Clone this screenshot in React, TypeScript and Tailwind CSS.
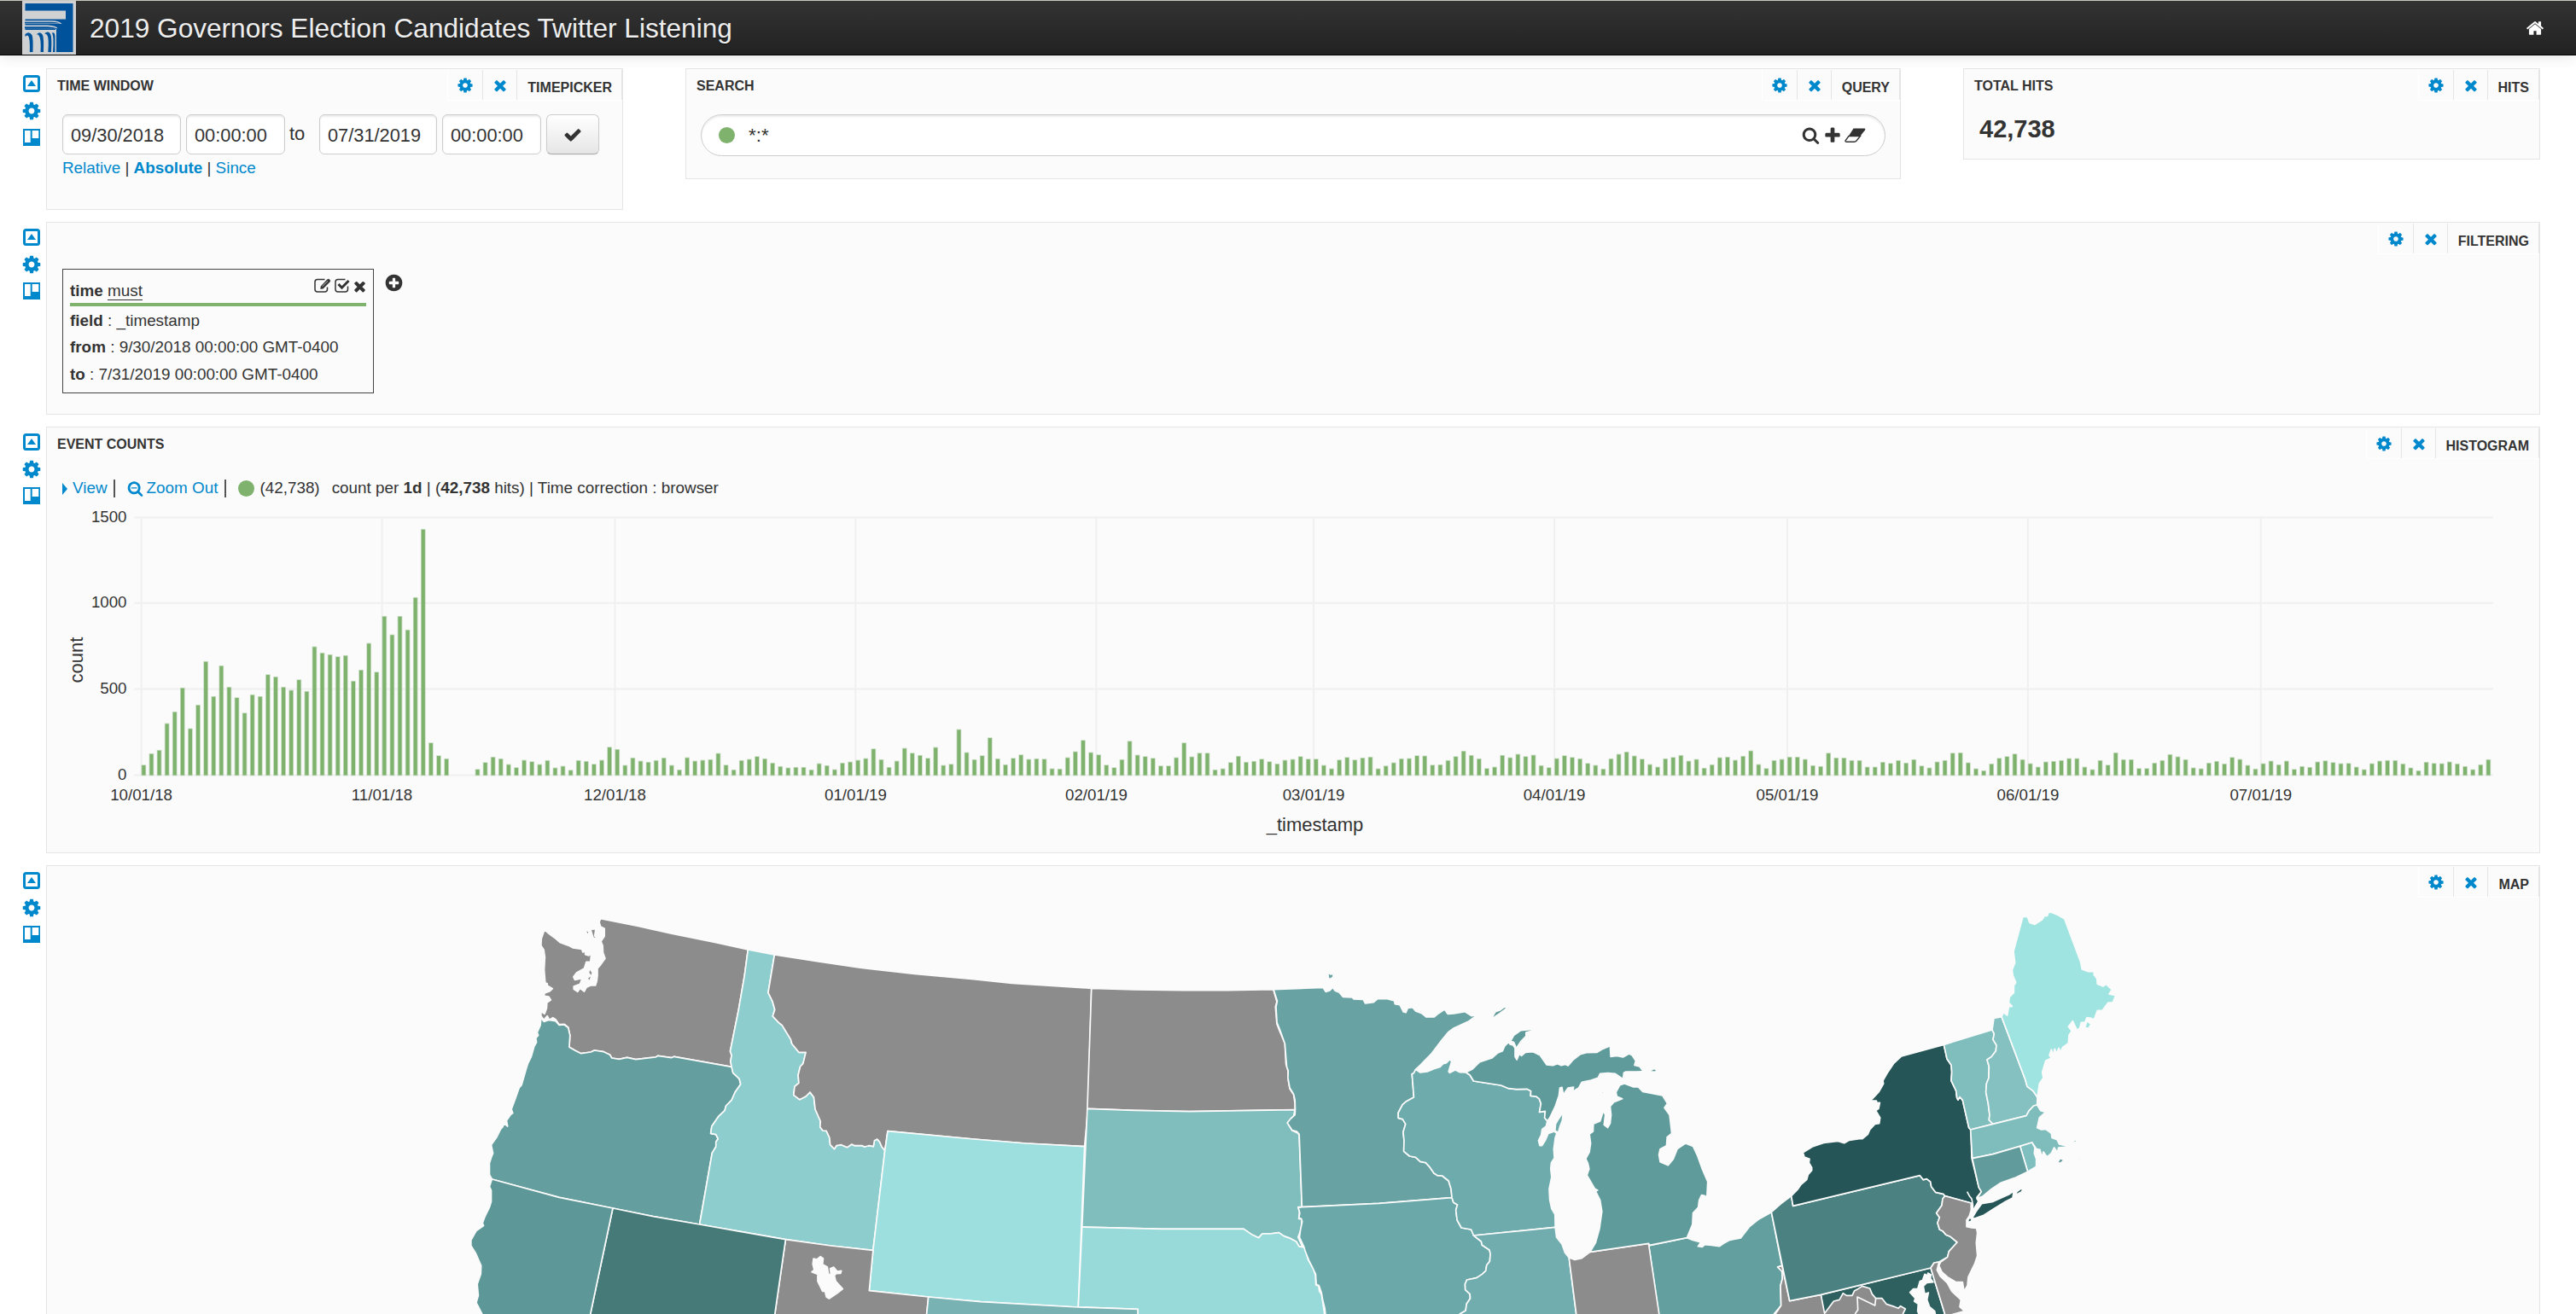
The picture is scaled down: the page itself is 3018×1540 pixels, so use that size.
import type { ReactNode } from "react";

const GLYPHS = {
  cog: "M1152 896q0-106-75-181t-181-75-181 75-75 181 75 181 181 75 181-75 75-181zm512-109v222q0 12-8 23t-20 13l-185 28q-19 54-39 91 35 50 107 138 10 12 10 25t-9 23q-27 37-99 108t-94 71q-12 0-26-9l-138-108q-44 23-91 38-16 136-29 186-7 28-36 28h-222q-14 0-24.5-8.5t-11.5-21.5l-28-184q-49-16-90-37l-141 107q-10 9-25 9-14 0-25-11-126-114-165-168-7-10-7-23 0-12 8-23 15-21 51-66.5t54-70.5q-27-50-41-99l-183-27q-13-2-21-12.5t-8-23.5v-222q0-12 8-23t19-13l186-28q14-46 39-92-40-57-107-138-10-12-10-24 0-10 9-23 26-36 98.5-107.5t94.5-71.5q13 0 26 10l138 107q44-23 91-38 16-136 29-186 7-28 36-28h222q14 0 24.5 8.5t11.5 21.5l28 184q49 16 90 37l142-107q9-9 24-9 13 0 25 10 129 119 165 170 7 8 7 22 0 12-8 23-15 21-51 66.5t-54 70.5q26 50 41 98l183 28q13 2 21 12.5t8 23.5z",
  times: "M1490 1322q0 40-28 68l-136 136q-28 28-68 28t-68-28l-294-294-294 294q-28 28-68 28t-68-28l-136-136q-28-28-28-68t28-68l294-294-294-294q-28-28-28-68t28-68l136-136q28-28 68-28t68 28l294 294 294-294q28-28 68-28t68 28l136 136q28 28 28 68t-28 68l-294 294 294 294q28 28 28 68z",
  plus: "M1600 736v192q0 40-28 68t-68 28h-416v416q0 40-28 68t-68 28h-192q-40 0-68-28t-28-68v-416h-416q-40 0-68-28t-28-68v-192q0-40 28-68t68-28h416v-416q0-40 28-68t68-28h192q40 0 68 28t28 68v416h416q40 0 68 28t28 68z",
  check: "M1671 566q0 40-28 68l-724 724-136 136q-28 28-68 28t-68-28l-136-136-362-362q-28-28-28-68t28-68l136-136q28-28 68-28t68 28l294 295 656-657q28-28 68-28t68 28l136 136q28 28 28 68z",
  search: "M1216 832q0-185-131.5-316.5t-316.5-131.5-316.5 131.5-131.5 316.5 131.5 316.5 316.5 131.5 316.5-131.5 131.5-316.5zm512 832q0 52-38 90t-90 38q-54 0-90-38l-343-342q-179 124-399 124-143 0-273.5-55.5t-225-150-150-225-55.5-273.5 55.5-273.5 150-225 225-150 273.5-55.5 273.5 55.5 225 150 150 225 55.5 273.5q0 220-124 399l343 343q37 37 37 90z",
  zoomOut: "M1088 800v64q0 13-9.5 22.5t-22.5 9.5h-576q-13 0-22.5-9.5t-9.5-22.5v-64q0-13 9.5-22.5t22.5-9.5h576q13 0 22.5 9.5t9.5 22.5zM1216 832q0-185-131.5-316.5t-316.5-131.5-316.5 131.5-131.5 316.5 131.5 316.5 316.5 131.5 316.5-131.5 131.5-316.5zm512 832q0 52-38 90t-90 38q-54 0-90-38l-343-342q-179 124-399 124-143 0-273.5-55.5t-225-150-150-225-55.5-273.5 55.5-273.5 150-225 225-150 273.5-55.5 273.5 55.5 225 150 150 225 55.5 273.5q0 220-124 399l343 343q37 37 37 90z",
  home: "M1472 992v480q0 26-19 45t-45 19h-384v-384h-256v384h-384q-26 0-45-19t-19-45v-480q0-1 .5-3t.5-3l575-474 575 474q1 2 1 6zm223-69l-62 74q-8 9-21 11h-3q-13 0-21-7l-692-577-692 577q-12 8-24 7-13-2-21-11l-62-74q-8-10-7-23.5t11-21.5l719-599q32-26 76-26t76 26l244 204v-195q0-14 9-23t23-9h192q14 0 23 9t9 23v408l219 182q10 8 11 21.5t-7 23.5z",
  plusCircle: "M1344 960v-128q0-26-19-45t-45-19h-256v-256q0-26-19-45t-45-19h-128q-26 0-45 19t-19 45v256h-256q-26 0-45 19t-19 45v128q0 26 19 45t45 19h256v256q0 26 19 45t45 19h128q26 0 45-19t19-45v-256h256q26 0 45-19t19-45zm320-64q0 209-103 385.5t-279.5 279.5-385.5 103-385.5-103-279.5-279.5-103-385.5 103-385.5 279.5-279.5 385.5-103 385.5 103 279.5 279.5 103 385.5z",
};

function Glyph({ name, className = "" }: { name: keyof typeof GLYPHS; className?: string }) {
  return (
    <svg viewBox="0 0 1792 1792" fill="currentColor" className={`shrink-0 ${className}`}>
      <path d={GLYPHS[name]} />
    </svg>
  );
}

function Logo() {
  return (
    <svg viewBox="0 0 63 63" className="ml-[26px] h-[63px] w-[63px]">
      <rect width="63" height="63" fill="#d0d1d3" />
      <rect x="3.5" y="3" width="56" height="57" fill="#00529b" />
      <g fill="#d0d1d3">
        <path d="M3 11.5H51V21.5H3Z" />
        <path d="M3 23.3H34Q44 23.5 46.5 27H3Z" />
        <path d="M3 28.6H30Q40 29 41.5 32.3H3Z" />
        <path d="M3 34H39V60H3Z" />
      </g>
      <path d="M3 24.8H34Q41 25 45 26.6H3ZM3 30.2H30Q37 30.5 41 32.2H3Z" fill="#00529b" />
      <path
        d="M3.5 42V39Q8 35 11.500 40Q13 43 12.500 60H8.800Q9.500 44 7 41Q5.500 39.500 3.500 42ZM16 40Q21 34.500 24 40Q25.500 43 25 60H21.500Q22.500 44 19.500 40.500Q18 38.500 16 40ZM26 38.500Q31 34 33.500 40Q34.800 43 34 60H30.300Q31.500 44 29.500 40.500Q28 38 26 38.500ZM35 37.500Q38 36 38.500 41V60H36Q37.500 42 35 37.500Z"
        fill="#00529b"
      />
      <path d="M39.500 33V60" stroke="#d0d1d3" strokeWidth="1" />
    </svg>
  );
}

function RowIcons() {
  return (
    <div className="flex w-[27px] shrink-0 flex-col pt-2 text-[#0088cc]">
      <svg viewBox="0 0 20 20" className="h-5 w-5">
        <rect x="1.5" y="1.5" width="17" height="17" rx="2" fill="none" stroke="currentColor" strokeWidth="3" />
        <path d="M5 13L10 6L15 13Z" fill="currentColor" />
      </svg>
      <Glyph name="cog" className="-ml-[2px] mt-[10px] h-6 w-6" />
      <svg viewBox="0 0 20 20" className="mt-[9px] h-5 w-5">
        <path d="M0 0H20V20H0Z" fill="currentColor" />
        <path d="M2 2H8.700V16H2ZM10.700 2H18.300V11H10.700Z" fill="#fff" />
      </svg>
    </div>
  );
}

function Panel({
  title,
  kind,
  className,
  children,
}: {
  title?: string;
  kind: string;
  className: string;
  children?: ReactNode;
}) {
  return (
    <section className={`flex shrink-0 flex-col border border-[#e5e5e5] bg-[#fbfbfb] ${className}`}>
      <header className="flex h-[53px] shrink-0 items-start justify-between text-[16px] font-bold">
        <h2 className="pl-3 leading-[40px]">{title}</h2>
        <div className="mt-px flex h-9 border-b border-white">
          <span className="flex w-[41px] items-center justify-center border-l border-white text-[#0088cc]">
            <Glyph name="cog" className="h-5 w-5" />
          </span>
          <span className="flex w-[40px] items-center justify-center border-l border-[#e5e5e5] pl-px text-[#0088cc]">
            <Glyph name="times" className="h-5 w-5" />
          </span>
          <span className="border-x border-[#e5e5e5] pl-3 pr-[11px] leading-[41px]">{kind}</span>
        </div>
      </header>
      {children}
    </section>
  );
}

function Field({ value, className }: { value: string; className: string }) {
  return (
    <div
      className={`h-[47px] rounded-[6px] border border-[#ccc] bg-white pl-[9px] text-[21.8px] leading-[47px] shadow-[inset_0_2px_2px_rgba(0,0,0,0.075)] ${className}`}
    >
      {value}
    </div>
  );
}

function TimePicker() {
  return (
    <div className="pl-[18px]">
      <div className="flex items-start">
        <Field value="09/30/2018" className="w-[139px]" />
        <Field value="00:00:00" className="ml-[6px] w-[116px]" />
        <span className="ml-[5px] w-[35px] text-[22px] leading-[45px]">to</span>
        <Field value="07/31/2019" className="w-[138px]" />
        <Field value="00:00:00" className="ml-[6px] w-[116px]" />
        <div className="ml-[6px] flex h-[47px] w-[62px] items-center justify-center rounded-[6px] border border-[#ccc] border-b-[#aaa] bg-linear-to-b from-white to-[#e6e6e6] shadow-[0_1px_2px_rgba(0,0,0,0.05)]">
          <Glyph name="check" className="h-[22px] w-[22px]" />
        </div>
      </div>
      <div className="whitespace-pre pt-[6px] text-[18.86px] leading-[20px]">
        <span className="text-[#0088cc]">Relative</span> | <b className="text-[#0088cc]">Absolute</b> |{" "}
        <span className="text-[#0088cc]">Since</span>
      </div>
    </div>
  );
}

function Search() {
  return (
    <div className="ml-[17px] mr-[17px] flex h-[49px] items-center rounded-full border border-[#ccc] bg-white pl-5 pr-[22px] shadow-[inset_0_2px_2px_rgba(0,0,0,0.075)]">
      <span className="h-[19px] w-[19px] rounded-full bg-[#7eb26d]" />
      <span className="ml-[16px] text-[22.4px] leading-[47px]">*:*</span>
      <div className="ml-auto flex items-center">
        <Glyph name="search" className="h-[21px] w-[21px]" />
        <Glyph name="plus" className="ml-[4px] h-[22px] w-[22px]" />
        <svg viewBox="0 0 25 17" className="ml-[3px] h-[17px] w-[25px]">
          <path d="M10.500 0.500H23.500Q25 0.500 24 2.500L18 10H4.500Z" fill="currentColor" />
          <path d="M5 9.500L1.200 14.500Q0.500 16.200 2 16.200H11.500Q13 16.200 14 15L18.500 9.500Z" fill="none" stroke="currentColor" strokeWidth="1.4" />
        </svg>
      </div>
    </div>
  );
}

function Filters() {
  return (
    <div className="flex pl-[18px] pt-px">
      <div className="h-[146px] w-[365px] border border-[#444] px-2 pt-[9px] text-[18.86px]">
        <div className="flex h-[34px] items-start border-b-4 border-[#7eb26d]">
          <span className="whitespace-pre leading-[31px]">
            <b>time</b> <span className="border-b border-[#333]">must</span>
          </span>
          <div className="-mr-[2px] ml-auto flex items-start">
            <svg viewBox="0 0 20 18" className="mt-px h-[18px] w-[20px]" fill="none" stroke="currentColor" strokeWidth="1.5">
              <path d="M12.500 1.500H4Q1 1.500 1 4.500V13Q1 16 4 16H12.500Q15.500 16 15.500 13V10.500" />
              <path d="M7.500 12.500L8 9.500L15.500 1.500Q17 0.500 18.500 2Q19.500 3.500 18 4.700L10.500 12.300Z" fill="currentColor" strokeWidth="0.400" />
              <path d="M9.500 9.800L16 3.400" stroke="#fbfbfb" strokeWidth="0.700" />
            </svg>
            <svg viewBox="0 0 18 18" className="ml-[4px] mt-px h-[18px] w-[18px]" fill="none" stroke="currentColor">
              <path d="M12.500 1.500H4Q1 1.500 1 4.500V13Q1 16 4 16H12.500Q15.500 16 15.500 13V9.500" strokeWidth="1.500" />
              <path d="M4.500 7L8.500 11.200L16.500 3" strokeWidth="3" />
            </svg>
            <Glyph name="times" className="ml-[2px] mt-px h-[19px] w-[19px]" />
          </div>
        </div>
        <div className="whitespace-pre leading-[31.4px] -mr-2 pt-[1px]">
          <p><b>field</b> : _timestamp</p>
          <p><b>from</b> : 9/30/2018 00:00:00 GMT-0400</p>
          <p><b>to</b> : 7/31/2019 00:00:00 GMT-0400</p>
        </div>
      </div>
      <Glyph name="plusCircle" className="ml-[12px] mt-[5px] h-[23px] w-[23px]" />
    </div>
  );
}

// Bar tops in thirds of a pixel above each block's own baseline, one per day from 10/01/18.
const TOPS_A = [
  950, 910, 898, 804, 763, 679, 822, 739, 586, 709,
  601, 676, 713, 767, 703, 709, 632, 640, 676, 687,
  650, 691, 534, 556, 562, 569, 565, 655, 616, 522,
  623, 427, 492, 427, 475, 361, 121, 872, 917, 928,
  987, 987, 987, 965, 941, 922, 928, 948, 959, 933,
  938, 948, 934, 960, 954, 968, 934, 937, 947, 933,
  887, 895, 951, 925, 936, 940, 934, 925, 951, 967,
];
const TOPS_B = [
  324, 336, 333, 331, 309, 350, 367, 334, 330, 320,
  328, 343, 355, 360, 358, 358, 367, 345, 352, 366,
  343, 339, 333, 327, 293, 331, 358, 336, 291, 308,
  316, 326, 288, 351, 347, 225, 306, 331, 317, 254,
  328, 349, 326, 314, 330, 328, 329, 363, 364, 324,
  303, 263, 306, 314, 350, 359, 331, 266, 315, 320,
  326, 353, 353, 324, 272, 321, 308, 308, 367, 363,
  341, 319, 340, 337, 329, 338, 346, 333, 330, 320,
  329, 329, 351, 363, 332, 323, 332, 325, 322, 363,
  353, 342, 328, 327, 317, 318, 350, 349, 334, 320,
  301, 316, 328, 362, 357, 316, 324, 312, 320, 315,
  352, 359, 327, 317, 323, 328, 344, 351, 364, 328,
  312,
  304, 318, 329, 348, 357, 328, 323, 316, 336, 330,
  361, 349, 324, 322, 333, 319, 300, 348, 362, 334,
  330, 322, 322, 330, 352, 355, 308, 325, 325, 334,
  334, 357, 357, 340, 344, 334, 343, 331, 353, 360,
  339, 334, 308, 307, 342, 363, 370, 346, 326, 320,
  311, 331, 345, 357, 339, 337, 334, 327, 327, 357,
  366, 334, 350, 307, 331, 331, 362, 362, 343, 334,
  313, 321, 331, 360, 363, 343, 337, 346, 323, 330,
  351, 364, 345, 336, 349, 336, 365, 355, 358, 339,
  335, 341, 345, 344, 357, 366, 345, 336, 334, 334,
  346, 360, 370, 340, 344, 345, 339, 346, 355, 366,
  349, 331,
];
const BARS = [...TOPS_A.map((t) => (987 - t) / 3), ...TOPS_B.map((t) => (387 - t) / 3)];
const DAY = 9.096;
const X0 = 165.6;
const BASE = 908.6;
const MONTHS: [number, string][] = [
  [0, "10/01/18"], [31, "11/01/18"], [61, "12/01/18"], [92, "01/01/19"], [123, "02/01/19"],
  [151, "03/01/19"], [182, "04/01/19"], [212, "05/01/19"], [243, "06/01/19"], [273, "07/01/19"],
];
const LEVELS: [number, string][] = [[908.6, "0"], [807.6, "500"], [706.8, "1000"], [606.5, "1500"]];

function Histogram() {
  return (
    <svg viewBox="55 590 2920 408" className="h-[408px] w-[2920px] font-['Liberation_Sans',sans-serif]">
      <g stroke="#f0f0f0" strokeWidth="2">
        {LEVELS.map(([y]) => <line key={y} x1="157" x2="2921" y1={y} y2={y} />)}
        {MONTHS.map(([d]) => <line key={d} x1={X0 + d * DAY} x2={X0 + d * DAY} y1="606" y2="909" />)}
      </g>
      <g fill="#7eb26d" stroke="#7eb26d" strokeOpacity="0.4" strokeWidth="1.600">
        {BARS.map((h, i) => h > 0 && <rect key={i} x={X0 + i * DAY + 0.7} y={BASE - h + 0.8} width="4.100" height={h - 1} />)}
      </g>
      <g fill="#333" fontSize="18.72">
        {LEVELS.map(([y, t]) => <text key={t} x="148.500" y={y + 5.500} textAnchor="end">{t}</text>)}
        {MONTHS.map(([d, t]) => <text key={t} x={X0 + d * DAY} y="938" textAnchor="middle">{t}</text>)}
      </g>
      <g fill="#333" fontSize="22" textAnchor="middle">
        <text x="1540.500" y="974">_timestamp</text>
        <text transform="translate(97 773.500) rotate(-90)">count</text>
      </g>
    </svg>
  );
}

function EventCounts() {
  return (
    <>
      <div className="flex h-[36px] shrink-0 items-center pl-[18px] pt-[1px] text-[18.86px]">
        <svg viewBox="0 0 6 14" className="h-[14px] w-[6px] text-[#0088cc]"><path d="M0 0L6 7L0 14Z" fill="currentColor" /></svg>
        <span className="ml-[6px] text-[#0088cc]">View</span>
        <span className="ml-[7px] h-[21px] w-[2px] bg-[#555]" />
        <Glyph name="zoomOut" className="ml-[14px] h-[19px] w-[19px] text-[#0088cc]" />
        <span className="ml-[4px] text-[#0088cc]">Zoom Out</span>
        <span className="ml-[8px] h-[21px] w-[2px] bg-[#555]" />
        <span className="ml-[14px] h-[19px] w-[19px] rounded-full bg-[#7eb26d]" />
        <span className="ml-[6px]">(42,738)</span>
        <span className="ml-[14px] whitespace-pre">count per <b>1d</b> | (<b>42,738</b> hits) | Time correction : browser</span>
      </div>
      <Histogram />
    </>
  );
}

type Shape = [fill: string, d: string];
const GRAY = "#8c8c8c";
const PAPER = "#fbfbfb";

const WEST: Shape[] = [
  [GRAY, "M499,110 610,137 700,162 830,194 922,219 912,310 895,430 871,576 875,590 872,612 875,631 710,595 702,599 663,592 657,597 600,605 575,598 552,604 531,600 526,589 508,578 481,573 471,579 443,584 425,573 409,562 411,520 406,492 395,481 380,482 370,464 362,458 352,466 346,452 336,466 328,452 328,436 338,445 344,425 345,405 356,396 350,384 337,382 338,372 352,366 361,356 346,345 346,338 340,335 337,290 339,245 336,220 328,205 329,180 338,149 350,162 370,180 382,193 408,205 420,213 445,217 448,228 455,225 455,236 465,240 472,232 470,262 458,262 452,285 430,300 421,315 425,325 446,320 440,340 422,348 422,358 433,367 440,355 452,366 458,352 470,345 484,345 488,330 490,310 490,285 497,275 512,250 506,230 505,205 500,190 510,172 510,145 499,138 495,122Z"],
  [GRAY, "M455,150 466,155 462,170ZM470,148 485,146 482,170 490,182 478,178ZM468,285 476,300 468,330 460,320 470,310 464,300Z"],
  ["#649e9e", "M328,458 336,472 350,466 370,470 380,484 395,483 406,494 411,520 409,562 425,573 443,584 471,579 481,573 508,578 526,589 531,600 552,604 575,598 600,605 657,597 663,592 702,599 710,595 875,631 879,652 897,673 901,692 885,720 875,748 859,768 855,785 837,806 818,840 815,865 830,869 836,884 830,895 830,912 819,934 783,1185 650,1157 534,1128 380,1090 187,1026 180,1010 180,970 185,950 190,935 185,905 200,880 212,850 218,842 222,830 232,840 229,820 240,800 247,794 243,780 255,740 265,705 272,695 278,670 285,640 290,620 300,595 308,560 315,545 313,530 320,520 317,510 326,485Z"],
  ["#8ecdcd", "M922,219 998,237 980,370 992,400 999,430 993,453 1010,475 1020,485 1045,535 1048,550 1060,568 1068,580 1088,580 1080,620 1072,630 1066,660 1068,688 1056,700 1053,730 1070,746 1088,735 1100,720 1111,738 1115,780 1130,822 1129,843 1137,855 1147,856 1156,880 1158,905 1170,920 1176,908 1190,905 1207,914 1220,903 1228,908 1250,908 1256,912 1270,908 1282,911 1285,890 1293,885 1300,895 1306,912 1315,925 1281,1276 1160,1260 1030,1238 900,1210 783,1185 819,934 830,912 830,895 836,884 830,869 815,865 818,840 837,806 855,785 859,768 875,748 885,720 901,692 897,673 879,652 875,631 872,612 875,590 871,576 895,430 912,310Z"],
  [GRAY, "M998,237 1120,260 1240,282 1400,304 1570,323 1680,337 1908,355 1898,778 1888,911 1720,900 1570,885 1323,857 1315,925 1306,912 1300,895 1293,885 1285,890 1282,911 1270,908 1256,912 1250,908 1228,908 1220,903 1207,914 1190,905 1176,908 1170,920 1158,905 1156,880 1147,856 1137,855 1129,843 1130,822 1115,780 1111,738 1100,720 1088,735 1070,746 1053,730 1056,700 1068,688 1066,660 1072,630 1080,620 1088,580 1068,580 1060,568 1048,550 1045,535 1020,485 1010,475 993,453 999,430 992,400 980,370Z"],
  ["#9cdfde", "M1323,857 1570,885 1720,900 1888,911 1870,1476 1590,1457 1440,1440 1270,1418 1281,1276 1315,925Z"],
  [GRAY, "M1030,1238 1160,1260 1281,1276 1270,1418 1440,1440 1434,1510 998,1510Z"],
  [PAPER, "M1110,1305 1120,1308 1130,1298 1138,1305 1136,1325 1150,1335 1153,1360 1160,1362 1158,1340 1168,1335 1178,1350 1190,1348 1188,1357 1175,1358 1170,1365 1174,1385 1194,1412 1180,1425 1155,1446 1147,1440 1143,1420 1136,1420 1122,1385 1122,1360 1105,1352 1112,1345 1108,1325Z"],
  ["#457a79", "M534,1128 650,1157 783,1185 900,1210 1030,1238 998,1510 468,1510Z"],
  ["#5d9797", "M187,1026 380,1090 534,1128 468,1510 163,1510 142,1460 148,1435 145,1395 155,1360 156,1330 140,1285 127,1260 127,1240 142,1208 163,1190 160,1180 166,1160 180,1125 185,1105 185,1065 180,1052Z"],
];

const PLAINS: Shape[] = [
  [GRAY, "M438,175 560,180 700,182 830,182 960,179 970,222 966,240 970,300 978,325 993,368 996,440 1002,465 1003,500 1007,528 1018,548 1022,580 1022,602 870,605 720,608 560,604 426,598Z"],
  ["#80bdbd", "M426,598 560,604 720,608 870,605 1022,602 1018,625 1001,648 1014,675 1030,684 1034,690 1042,944 1031,944 1035,960 1033,985 1042,987 1040,1020 1031,1050 1043,1083 1034,1083 1026,1066 1010,1055 990,1046 976,1034 950,1038 928,1038 918,1052 900,1042 875,1021 640,1021 411,1014Z"],
  ["#97dad9", "M411,1014 640,1021 875,1021 900,1042 918,1052 928,1038 950,1038 976,1034 990,1046 1010,1055 1026,1066 1034,1083 1050,1086 1056,1110 1060,1130 1074,1158 1081,1185 1082,1218 1090,1222 1092,1240 1098,1250 1102,1280 1108,1330 571,1330 571,1303 400,1296Z"],
  ["#78b2b3", "M-30,1260 120,1277 400,1296 571,1303 571,1330 -36,1330Z"],
];

const LAKES: Shape[] = [
  ["#68a2a3", "M34,119 196,112 205,127 218,123 228,112 236,124 250,130 262,145 292,147 297,153 328,154 335,168 362,164 375,152 405,151 430,159 432,170 448,173 460,198 468,200 474,184 490,182 500,195 520,203 535,216 560,216 575,203 595,189 605,205 625,204 662,197 684,212 703,208 672,232 625,255 608,268 585,298 550,347 515,385 500,400 494,413 488,416 494,498 470,512 457,524 443,552 443,571 457,575 467,592 459,620 462,650 461,688 480,705 500,709 515,724 533,728 545,742 560,765 572,773 587,774 608,792 616,820 619,851 380,871 127,884 118,628 110,618 95,614 79,588 90,573 104,560 105,540 104,508 100,488 87,465 81,430 82,405 77,390 71,310 55,262 45,235 42,180 46,160Z"],
  ["#68a2a3", "M212,59 222,66 230,62 229,76 218,83 214,79Z"],
  ["#6ba8a9", "M127,884 380,871 619,851 624,868 637,876 632,895 636,930 650,957 682,963 692,985 715,1005 718,1018 742,1035 745,1048 743,1075 733,1088 730,1108 718,1120 700,1133 668,1140 662,1155 663,1175 678,1190 679,1205 667,1225 664,1248 645,1260 640,1270 205,1270 202,1240 195,1210 191,1185 183,1160 174,1155 172,1120 161,1095 150,1072 138,1040 134,1025 119,990 122,965 128,935 125,925 117,922 120,905 115,886Z"],
  ["#6eabac", "M500,400 515,411 538,408 560,398 580,391 590,380 600,378 612,365 618,372 608,408 612,412 630,402 645,410 665,411 678,420 690,441 780,456 805,467 830,470 865,469 878,476 877,493 895,495 905,503 911,520 906,550 925,547 923,570 932,582 928,600 915,610 912,630 903,650 907,668 914,668 925,650 935,625 955,618 963,625 958,640 953,680 955,712 945,728 943,750 946,778 938,820 940,860 946,890 957,910 958,955 690,984 682,963 650,957 636,930 632,895 637,876 624,868 619,851 616,820 608,792 587,774 572,773 560,765 545,742 533,728 515,724 500,709 480,705 461,688 462,650 459,620 467,592 457,575 443,571 443,552 457,524 470,512 494,498 488,416 494,413Z"],
  ["#6eabac", "M957,616 959,592 970,572 984,550 981,580 973,602 968,622Z"],
  ["#71adae", "M690,984 958,955 962,990 980,1015 990,1045 1003,1062 1028,1270 640,1270 645,1260 664,1248 667,1225 679,1205 678,1190 663,1175 662,1155 668,1140 700,1133 718,1120 730,1108 733,1088 743,1075 745,1048 742,1035 718,1018 715,1005Z"],
  [GRAY, "M1003,1062 1022,1069 1045,1064 1072,1042 1264,1012 1300,1270 1028,1270Z"],
  ["#609b9c", "M665,410 685,400 710,374 750,360 768,343 785,335 792,318 805,304 810,312 820,315 826,325 826,355 832,366 840,345 847,352 860,340 885,338 908,350 930,384 950,386 965,380 978,386 990,382 1000,387 1015,368 1040,347 1060,341 1095,340 1110,330 1138,317 1140,355 1160,352 1180,357 1200,345 1210,350 1222,370 1218,385 1235,390 1243,402 1257,407 1225,408 1190,408 1183,412 1180,434 1155,415 1130,413 1105,415 1098,430 1075,438 1045,445 1035,465 1022,473 1013,492 1018,462 1000,465 990,480 985,492 980,463 973,465 970,492 958,530 940,570 932,582 923,570 925,547 906,550 911,520 905,503 895,495 877,493 878,476 865,469 830,470 805,467 780,456 690,441 678,420Z"],
  ["#609b9c", "M811,301 822,280 845,263 882,259 880,265 862,270 862,283 845,302 830,326 822,305ZM750,218 762,197 778,191 798,175 796,187 775,204 758,216ZM1264,407 1280,398 1278,389 1285,399 1292,404 1285,409ZM1109,486 1114,466 1117,482ZM1200,443 1216,443 1210,448Z"],
  ["#609b9c", "M1072,1042 1090,1010 1103,960 1111,900 1105,860 1090,828 1097,825 1088,820 1062,772 1069,750 1065,730 1058,714 1070,690 1074,660 1070,627 1082,618 1083,592 1105,582 1116,545 1122,560 1118,595 1130,605 1138,590 1141,560 1138,530 1150,515 1178,503 1160,495 1157,480 1170,455 1185,450 1215,462 1230,462 1245,478 1310,492 1326,520 1316,535 1333,560 1340,625 1325,638 1323,668 1302,680 1298,700 1302,725 1328,737 1345,715 1358,680 1385,660 1410,670 1425,705 1440,750 1458,795 1455,858 1450,845 1438,842 1430,860 1427,885 1410,905 1408,945 1390,992 1268,1018 1264,1012Z"],
];

const EAST: Shape[] = [
  ["#649f9f", "M-265,1260 -131,1232 -110,1240 -82,1248 -92,1262 -77,1264 -68,1256 -45,1258 -16,1262 -2,1252 20,1240 58,1233 90,1192 120,1168 166,1142 203,1330 188,1335 203,1350 205,1375 198,1400 200,1470 175,1500 170,1515 -228,1515Z"],
  ["#2f6060", "M340,1432 726,1338 780,1515 350,1515Z"],
  [PAPER, "M688,1385 697,1382 705,1360 715,1366 716,1356 727,1362 725,1375 735,1388 712,1390 700,1402 705,1430 718,1425 713,1450 722,1475 740,1490 745,1515 690,1515 680,1490 682,1465 668,1455 672,1445 653,1424 665,1412 680,1412Z"],
  [GRAY, "M203,1330 230,1454 340,1432 353,1498 385,1455 405,1450 418,1427 430,1435 450,1435 458,1418 470,1412 485,1402 512,1410 520,1430 533,1445 555,1445 570,1465 600,1475 612,1480 620,1472 637,1482 628,1500 632,1515 170,1515 200,1470 198,1400 205,1375 203,1350 188,1335Z"],
  ["none", "M460,1500 470,1485 468,1440 530,1470 533,1445"],
  ["#4b8180", "M236,1085 242,1120 688,1013 700,1028 712,1025 725,1035 728,1052 743,1072 770,1078 776,1085 768,1095 765,1118 746,1145 757,1160 750,1180 757,1203 768,1208 780,1222 795,1228 819,1248 790,1280 785,1300 755,1317 738,1320 726,1338 340,1432 230,1454 166,1142 200,1112Z"],
  ["#255556", "M236,1085 260,1060 270,1045 290,1028 295,1010 308,995 308,985 298,968 300,955 282,948 277,932 310,912 350,898 400,892 422,899 440,889 480,883 486,884 505,868 512,852 530,832 545,830 548,810 533,785 543,778 547,757 537,758 535,750 513,750 522,742 543,720 560,690 558,680 575,650 595,620 623,594 772,553 777,575 783,603 798,625 800,650 798,680 815,715 818,740 822,747 828,737 838,748 860,845 867,852 870,952 895,1055 904,1070 888,1090 893,1105 875,1135 868,1110 776,1085 770,1078 743,1072 728,1052 725,1035 712,1025 700,1028 688,1013 242,1120Z"],
  ["none", "M854,1070 862,1085 870,1095 874,1115 874,1140"],
  ["#255556", "M872,1163 885,1140 905,1112 945,1105 1000,1080 1018,1068 1014,1092 990,1104 945,1132 910,1154 880,1164ZM1020,1084 1030,1069 1051,1054 1046,1070ZM856,1178 859,1164 872,1164 867,1175Z"],
  [GRAY, "M776,1085 868,1110 868,1135 862,1155 852,1170 852,1193 870,1197 887,1198 890,1215 886,1250 890,1295 880,1325 870,1345 858,1370 855,1400 843,1420 838,1388 815,1388 785,1370 765,1352 755,1330 760,1318 785,1300 790,1280 819,1248 795,1228 780,1222 768,1208 757,1203 750,1180 757,1160 746,1145 765,1118 768,1095Z"],
  [GRAY, "M726,1338 738,1320 755,1317 748,1345 760,1368 785,1392 800,1420 832,1450 828,1475 845,1490 778,1508Z"],
  ["#80bdbd", "M772,553 942,501 949,515 945,535 957,555 955,575 940,595 924,606 931,630 930,670 922,690 920,720 928,760 933,800 931,818 945,832 866,852 860,845 838,748 828,737 822,747 818,740 815,715 798,680 800,650 798,625 783,603 777,575Z"],
  ["#84c1c0", "M948,460 975,455 1058,675 1065,700 1085,715 1101,738 1100,765 1088,768 1072,785 1062,803 945,832 931,818 933,800 928,760 920,720 922,690 930,670 931,630 924,606 940,595 955,575 957,555 945,535 949,515 942,501Z"],
  ["#9fe4e1", "M975,455 982,440 995,450 1000,420 1012,418 1000,405 1003,385 1018,370 1018,345 1025,335 1015,310 1012,290 1022,265 1017,225 1050,103 1066,103 1074,124 1092,130 1118,113 1126,100 1136,100 1140,87 1150,88 1172,97 1196,110 1253,262 1258,288 1280,296 1300,295 1300,308 1310,320 1312,340 1332,348 1342,340 1363,360 1353,375 1376,380 1366,405 1350,405 1330,432 1312,433 1300,465 1290,460 1275,458 1268,475 1255,475 1250,495 1240,502 1225,470 1210,490 1222,505 1212,520 1210,548 1190,562 1183,578 1176,565 1168,585 1162,568 1156,590 1150,570 1143,590 1150,600 1130,610 1118,650 1122,670 1108,690 1101,738 1085,715 1065,700 1058,675Z"],
  ["#9fe4e1", "M1268,492 1275,470 1289,480 1281,497Z"],
  ["#7fbcbc", "M866,852 945,832 1062,803 1072,785 1088,768 1100,765 1112,785 1130,790 1108,810 1100,845 1115,852 1130,850 1150,865 1152,880 1170,887 1178,903 1200,908 1222,897 1233,888 1228,875 1213,855 1230,870 1239,893 1200,913 1175,915 1172,932 1160,915 1150,935 1135,948 1122,930 1117,950 1110,922 1098,920 1082,897 1040,910 945,938 872,953Z"],
  ["#80bfc0", "M1040,910 1082,897 1092,915 1090,935 1097,955 1097,982 1067,1000Z"],
  ["#619b9c", "M872,953 945,938 1040,910 1067,1000 1020,1022 970,1040 940,1060 910,1085 888,1095 904,1070 895,1055Z"],
  ["#619b9c", "M1170,972 1180,953 1195,958 1186,967ZM1239,959 1253,949 1251,959Z"],
];

function Region({ shapes, transform }: { shapes: Shape[]; transform: string }) {
  return (
    <g transform={transform}>
      {shapes.map(([fill, d]) => (
        <path key={d} d={d} fill={fill} stroke={PAPER} strokeWidth="1.700" strokeLinejoin="round" vectorEffect="non-scaling-stroke" />
      ))}
    </g>
  );
}

function StatesMap() {
  return (
    <svg viewBox="55 1060 2920 480" className="-mt-[8px] h-[480px] w-[2920px]">
      <Region shapes={WEST} transform="translate(500 1040) scale(0.408163 0.333333)" />
      <Region shapes={PLAINS} transform="translate(1100 1100) scale(0.408163 0.333333)" />
      <Region shapes={EAST} transform="translate(2020 1040) scale(0.333333)" />
      <Region shapes={LAKES} transform="translate(1480 1120) scale(0.357143 0.333333)" />
    </svg>
  );
}

export default function App() {
  return (
    <div className="h-[1540px] w-[3018px] overflow-hidden bg-white font-['Liberation_Sans',sans-serif] text-[#333]">
      <nav className="relative flex h-[65px] items-center border-b border-t border-b-black border-t-[#c8c7c0] bg-linear-to-b from-[#333] to-[#222] text-white shadow-[0_1px_16px_rgba(0,0,0,0.12)]">
        <Logo />
        <h1 className="ml-[16px] text-[31.6px] leading-[40px] text-[#eee] [text-shadow:0_2px_0_rgba(0,0,0,0.25)]">
          2019 Governors Election Candidates Twitter Listening
        </h1>
        <Glyph name="home" className="ml-auto mr-[37px] h-[22px] w-[22px]" />
      </nav>
      <main className="flex flex-col pl-[27px] pt-[15px]">
        <div className="flex h-[180px] items-start">
          <RowIcons />
          <Panel title="TIME WINDOW" kind="TIMEPICKER" className="h-[166px] w-[676px]">
            <TimePicker />
          </Panel>
          <Panel title="SEARCH" kind="QUERY" className="ml-[73px] h-[130px] w-[1424px]">
            <Search />
          </Panel>
          <Panel title="TOTAL HITS" kind="HITS" className="ml-[73px] h-[107px] w-[676px]">
            <p className="pl-[18px] text-[29px] font-bold leading-[34px]">42,738</p>
          </Panel>
        </div>
        <div className="flex h-[240px] items-start">
          <RowIcons />
          <Panel kind="FILTERING" className="h-[226px] w-[2922px]">
            <Filters />
          </Panel>
        </div>
        <div className="flex h-[514px] items-start">
          <RowIcons />
          <Panel title="EVENT COUNTS" kind="HISTOGRAM" className="h-[500px] w-[2922px]">
            <EventCounts />
          </Panel>
        </div>
        <div className="flex items-start">
          <RowIcons />
          <Panel kind="MAP" className="h-[900px] w-[2922px]">
            <StatesMap />
          </Panel>
        </div>
      </main>
    </div>
  );
}
